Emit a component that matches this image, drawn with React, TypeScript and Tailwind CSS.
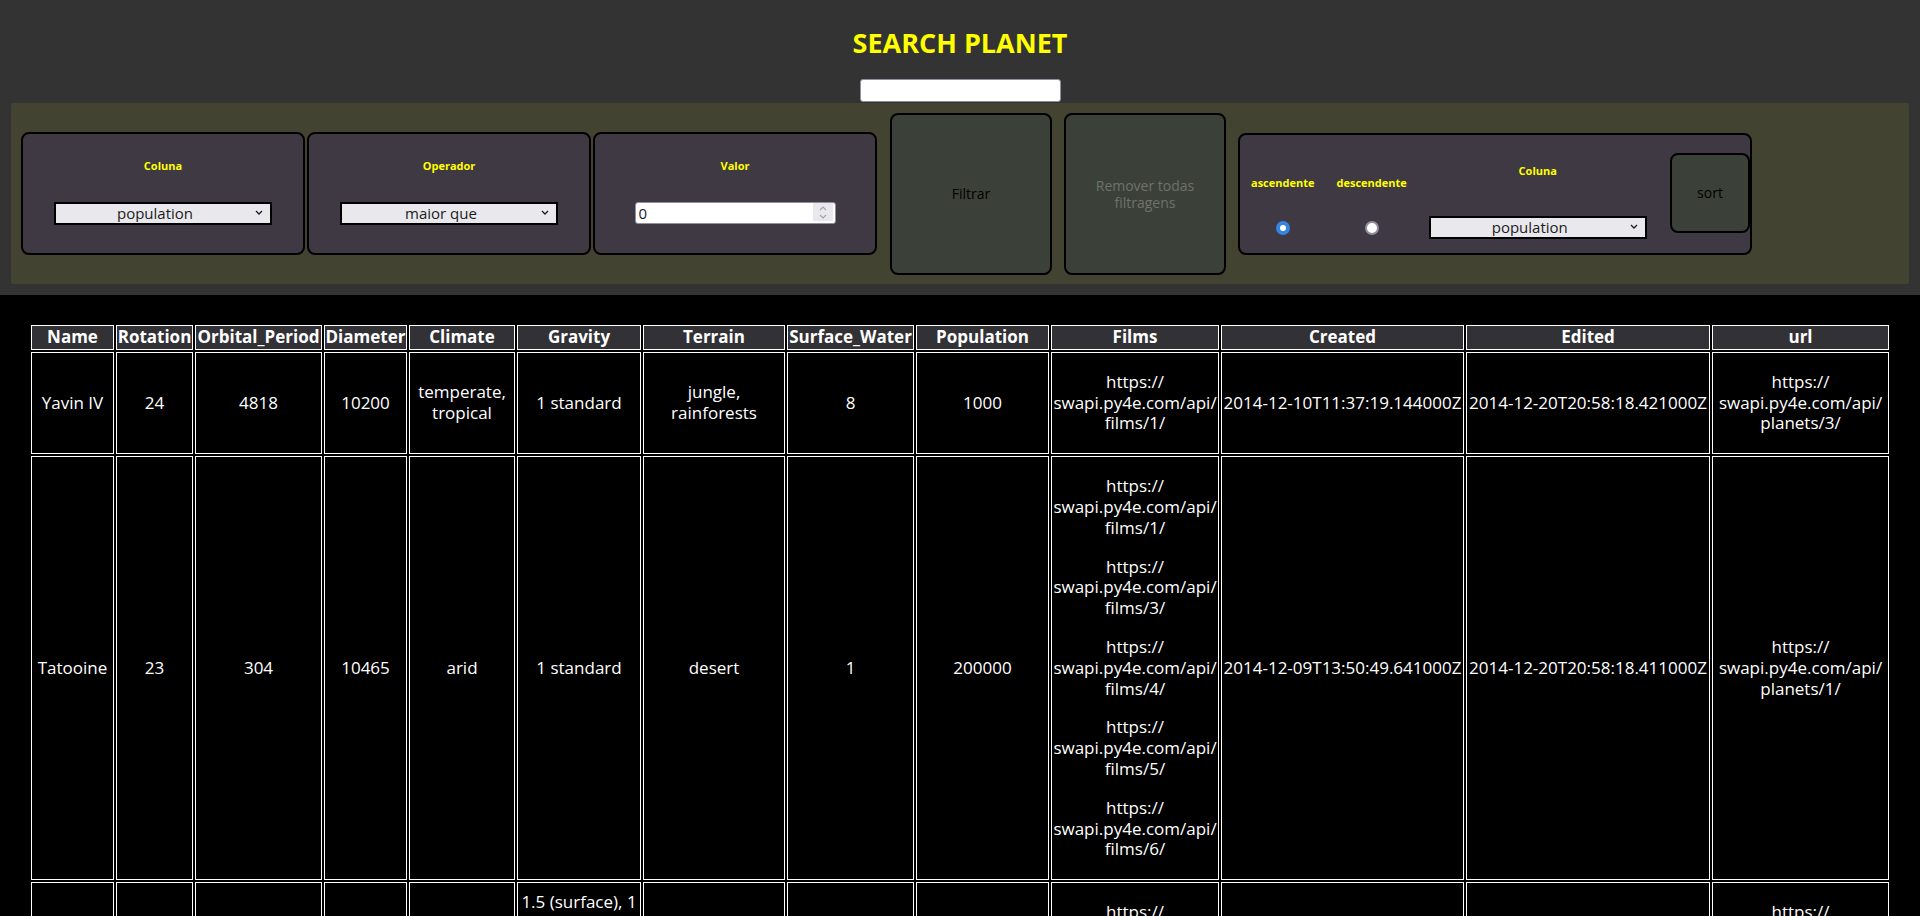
import React from 'react'

type Planet = {
  name: string
  rotation: string
  orbital: string
  diameter: string
  climate: string[]
  gravity: string[]
  terrain: string[]
  water: string
  population: string
  films: number[]
  created: string
  edited: string
  id: number
}

const planets: Planet[] = [
  {
    name: 'Yavin IV',
    rotation: '24',
    orbital: '4818',
    diameter: '10200',
    climate: ['temperate,', 'tropical'],
    gravity: ['1 standard'],
    terrain: ['jungle,', 'rainforests'],
    water: '8',
    population: '1000',
    films: [1],
    created: '2014-12-10T11:37:19.144000Z',
    edited: '2014-12-20T20:58:18.421000Z',
    id: 3,
  },
  {
    name: 'Tatooine',
    rotation: '23',
    orbital: '304',
    diameter: '10465',
    climate: ['arid'],
    gravity: ['1 standard'],
    terrain: ['desert'],
    water: '1',
    population: '200000',
    films: [1, 3, 4, 5, 6],
    created: '2014-12-09T13:50:49.641000Z',
    edited: '2014-12-20T20:58:18.411000Z',
    id: 1,
  },
  {
    name: 'Bespin',
    rotation: '12',
    orbital: '5110',
    diameter: '118000',
    climate: ['temperate'],
    gravity: ['1.5 (surface), 1', 'standard (Cloud', 'City)'],
    terrain: ['gas giant'],
    water: '0',
    population: '6000000',
    films: [2],
    created: '2014-12-10T11:43:55.240000Z',
    edited: '2014-12-20T20:58:18.427000Z',
    id: 6,
  },
]

const columns = [
  { label: 'Name', w: 'w-[83px]' },
  { label: 'Rotation', w: 'w-[77px]' },
  { label: 'Orbital_Period', w: 'w-[127px]' },
  { label: 'Diameter', w: 'w-[83px]' },
  { label: 'Climate', w: 'w-[106px]' },
  { label: 'Gravity', w: 'w-[124px]' },
  { label: 'Terrain', w: 'w-[142px]' },
  { label: 'Surface_Water', w: 'w-[127px]' },
  { label: 'Population', w: 'w-[133px]' },
  { label: 'Films', w: 'w-[168px]' },
  { label: 'Created', w: 'w-[243px]' },
  { label: 'Edited', w: 'w-[244px]' },
  { label: 'url', w: 'w-[177px]' },
]

function Lines({ lines }: { lines: string[] }) {
  return (
    <>
      {lines.map((l, i) => (
        <React.Fragment key={i}>
          {i > 0 && <br />}
          {l}
        </React.Fragment>
      ))}
    </>
  )
}

function SelectBox({ value, options }: { value: string; options: string[] }) {
  return (
    <div className="relative w-[218px] h-[23px]">
      <select
        defaultValue={value}
        className="w-full h-full appearance-none rounded-none border-2 border-black bg-[#e9e9ed] pr-[16px] text-center [text-align-last:center] text-[15px] leading-[17px] text-[#1c1b22] outline-none"
      >
        {options.map((o) => (
          <option key={o}>{o}</option>
        ))}
      </select>
      <svg
        className="pointer-events-none absolute right-[9px] top-[9px]"
        width="8"
        height="5"
        viewBox="0 0 8 5"
      >
        <path d="M1 1 L4 4 L7 1" stroke="#1c1b22" strokeWidth="1.3" fill="none" />
      </svg>
    </div>
  )
}

const labelCls = "text-[11px] leading-[13px] font-bold text-[#ffff00]"
const columnOptions = ['population', 'orbital_period', 'diameter', 'rotation_period', 'surface_water']

function FilterBox({ label, children }: { label: string; children: React.ReactNode }) {
  return (
    <div className="w-[284px] h-[123px] rounded-[8px] border-2 border-black bg-[#3f3943] flex flex-col items-center pt-[25px]">
      <span className={labelCls}>{label}</span>
      <div className="mt-[29px]">{children}</div>
    </div>
  )
}

function NumberInput() {
  return (
    <div className="relative w-[201px] h-[22px]">
      <input
        type="text"
        defaultValue="0"
        className="w-full h-full rounded-[3px] border border-[#8f8f9d] bg-white pl-[3px] text-[15px] text-[#1c1b22] outline-none"
      />
      <div className="pointer-events-none absolute right-[3px] top-[2px] w-[20px] h-[18px] bg-[#e9e9ed] flex flex-col items-center justify-center gap-[3px]">
        <svg width="8" height="5" viewBox="0 0 8 5">
          <path d="M1 4 L4 1 L7 4" stroke="#a3a3ab" strokeWidth="1.2" fill="none" />
        </svg>
        <svg width="8" height="5" viewBox="0 0 8 5">
          <path d="M1 1 L4 4 L7 1" stroke="#a3a3ab" strokeWidth="1.2" fill="none" />
        </svg>
      </div>
    </div>
  )
}

function FilterPanel() {
  return (
    <div className="mx-[11px] mt-px h-[181px] rounded-[2px] bg-[#424330] flex items-center pl-[10px]">
      <FilterBox label="Coluna">
        <SelectBox value="population" options={columnOptions} />
      </FilterBox>
      <div className="ml-[2px]">
        <FilterBox label="Operador">
          <SelectBox value="maior que" options={['maior que', 'menor que', 'igual a']} />
        </FilterBox>
      </div>
      <div className="ml-[2px]">
        <FilterBox label="Valor">
          <NumberInput />
        </FilterBox>
      </div>

      <button className="ml-[13px] w-[162px] h-[162px] rounded-[8px] border-2 border-black bg-[#3b4139] text-[14px] text-black">
        Filtrar
      </button>
      <button
        disabled
        className="ml-[12px] w-[162px] h-[162px] rounded-[8px] border-2 border-black bg-[#3b4139] text-[14px] leading-[17px] text-[#6f716c] px-[20px]"
      >
        Remover todas filtragens
      </button>

      {/* Sort */}
      <div className="ml-[12px] w-[514px] h-[122px] rounded-[8px] border-2 border-black bg-[#3f3943] flex items-start pl-[11px] gap-[22px]">
        <label className="mt-[41px] flex flex-col items-center">
          <span className={labelCls}>ascendente</span>
          <input
            type="radio"
            name="sort"
            defaultChecked
            className="mt-[32px] appearance-none w-[14px] h-[14px] rounded-full border-[4px] border-[#3584e4] bg-white"
          />
        </label>
        <label className="mt-[41px] flex flex-col items-center">
          <span className={labelCls}>descendente</span>
          <input
            type="radio"
            name="sort"
            className="mt-[32px] appearance-none w-[14px] h-[14px] rounded-full border-2 border-[#8f8f9d] bg-white"
          />
        </label>
        <div className="mt-[29px] flex flex-col items-center">
          <span className={labelCls}>Coluna</span>
          <div className="mt-[38px]">
            <SelectBox value="population" options={columnOptions} />
          </div>
        </div>
        <button className="ml-auto mt-[18px] w-[80px] h-[80px] rounded-[8px] border-2 border-black bg-[#3b4139] text-[14px] text-black">
          sort
        </button>
      </div>
    </div>
  )
}

function PlanetTable() {
  const td = "border border-white px-0 py-px text-center align-middle"
  return (
    <div className="pt-[28px] px-[29px]">
      <table className="w-[1862px] table-fixed border-separate border-spacing-[2px] text-[17px] leading-[20.8px] text-white">
        <colgroup>
          {columns.map((c) => (
            <col key={c.label} className={c.w} />
          ))}
        </colgroup>
        <thead>
          <tr>
            {columns.map((c) => (
              <th key={c.label} className={`${td} bg-[#313136] font-bold whitespace-nowrap`}>
                {c.label}
              </th>
            ))}
          </tr>
        </thead>
        <tbody>
          {planets.map((p) => (
            <tr key={p.name}>
              <td className={td}>{p.name}</td>
              <td className={td}>{p.rotation}</td>
              <td className={td}>{p.orbital}</td>
              <td className={td}>{p.diameter}</td>
              <td className={td}><Lines lines={p.climate} /></td>
              <td className={td}><Lines lines={p.gravity} /></td>
              <td className={td}><Lines lines={p.terrain} /></td>
              <td className={td}>{p.water}</td>
              <td className={td}>{p.population}</td>
              <td className={td}>
                {p.films.map((f) => (
                  <p key={f} className="my-[18px]">
                    https://
                    <br />
                    swapi.py4e.com/api/
                    <br />
                    films/{f}/
                  </p>
                ))}
              </td>
              <td className={`${td} whitespace-nowrap`}>{p.created}</td>
              <td className={`${td} whitespace-nowrap`}>{p.edited}</td>
              <td className={td}>
                https://
                <br />
                swapi.py4e.com/api/
                <br />
                planets/{p.id}/
              </td>
            </tr>
          ))}
        </tbody>
      </table>
    </div>
  )
}

export default function App() {
  return (
    <div className="h-[916px] overflow-hidden bg-black font-['Open_Sans',sans-serif]">
      <header className="bg-[#333333] pt-[27px] pb-[11px]">
        <h2 className="text-center text-[27px] leading-[32px] font-bold text-[#ffff00]">SEARCH PLANET</h2>
        <div className="mt-[20px] flex justify-center">
          <input
            type="text"
            className="w-[201px] h-[23px] rounded-[3px] border border-[#8f8f9d] bg-white outline-none"
          />
        </div>
        <FilterPanel />
      </header>
      <PlanetTable />
    </div>
  )
}
